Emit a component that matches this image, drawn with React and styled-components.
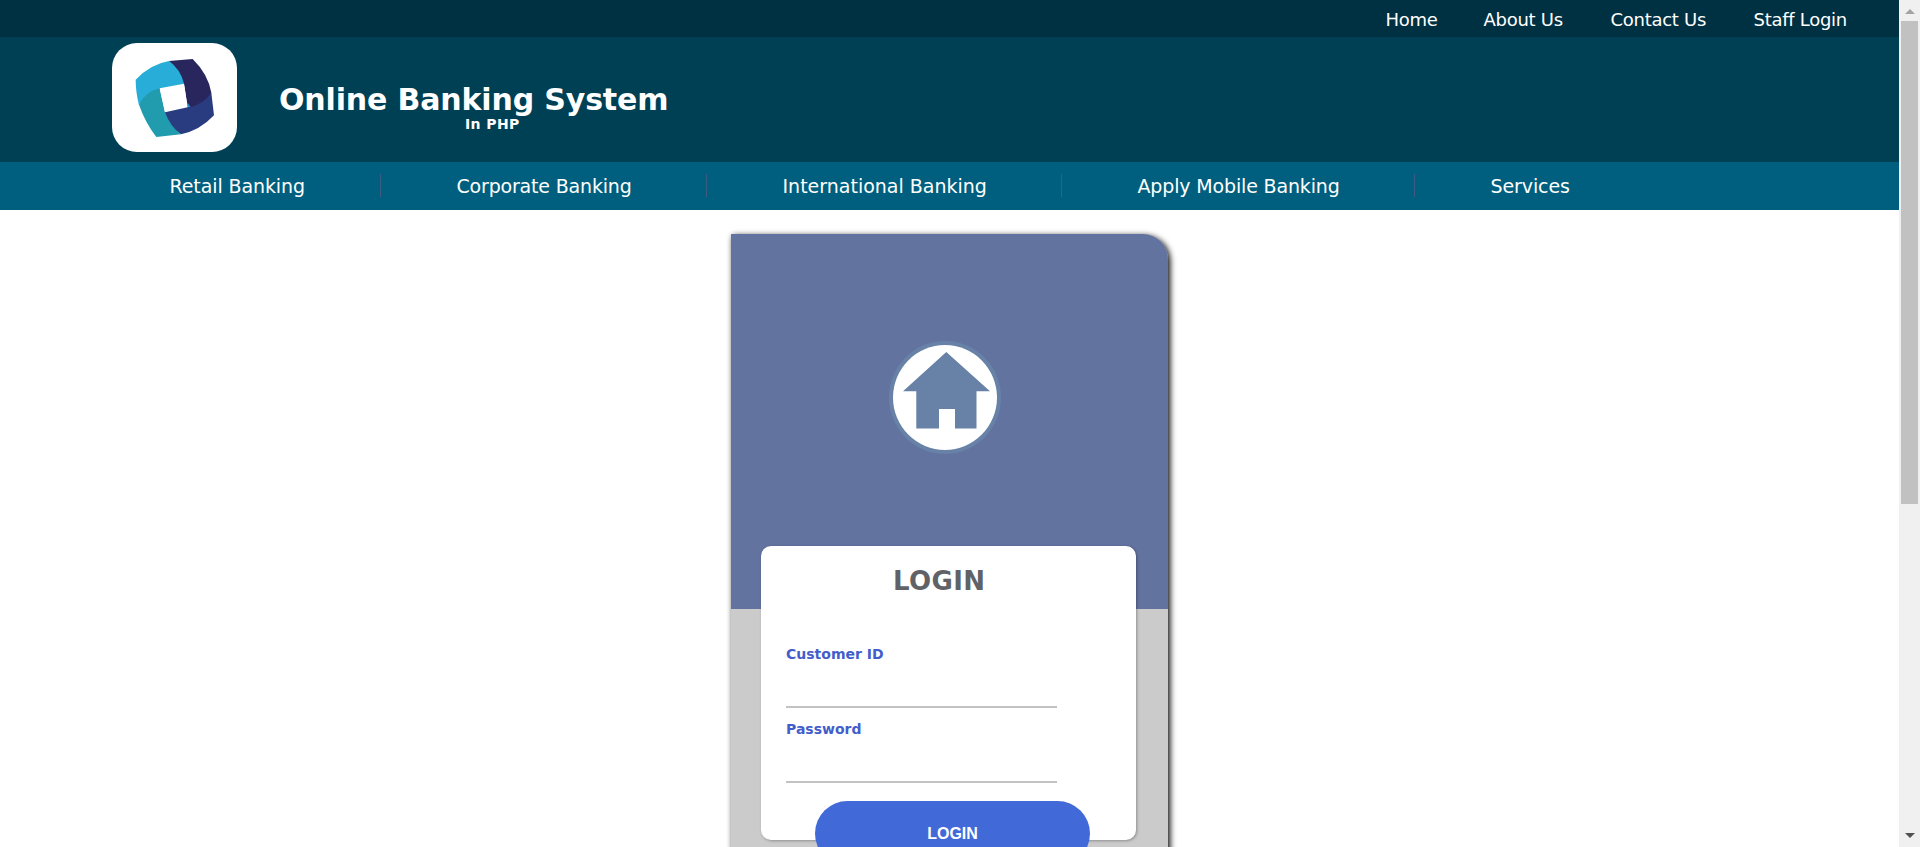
import React from "react";
import styled, { createGlobalStyle } from "styled-components";

const GlobalStyle = createGlobalStyle`
  * { box-sizing: border-box; }
  body {
    margin: 0;
    background: #fff;
    font-family: "DejaVu Sans", Verdana, sans-serif;
    overflow: hidden;
  }
`;

const Screen = styled.div`
  display: flex;
  width: 100%;
  height: 847px;
  overflow: hidden;
`;

const Page = styled.div`
  flex: 1;
  height: 100%;
  overflow: hidden;
`;

const TopBar = styled.nav`
  display: flex;
  justify-content: flex-end;
  align-items: center;
  gap: 47px;
  height: 37px;
  padding: 2px 50.5px 0 0;
  background: #003142;
`;

const TopLink = styled.a`
  width: ${(p) => p.$width}px;
  color: #fff;
  font-size: 18px;
  line-height: 22px;
  letter-spacing: -0.28px;
  white-space: nowrap;
`;

const Header = styled.header`
  display: flex;
  align-items: flex-start;
  height: 125px;
  padding: 6px 0 0 112px;
  background: #004054;
`;

const LogoTile = styled.div`
  width: 125px;
  height: 109px;
  border-radius: 25px;
  background: #fff;
  overflow: hidden;
`;

const Brand = styled.div`
  width: 390px;
  margin: 39px 0 0 42px;
  color: #fff;
  font-weight: bold;
`;

const BrandName = styled.h1`
  margin: 0;
  font-size: 30px;
  line-height: 36px;
  letter-spacing: -0.15px;
  white-space: nowrap;
`;

const BrandNote = styled.div`
  padding-left: 186px;
  margin-top: -2px;
  font-size: 14px;
  line-height: 16px;
  letter-spacing: 0.4px;
`;

const MainNav = styled.nav`
  display: flex;
  align-items: center;
  height: 48px;
  padding: 0 0 1px 94px;
  background: #005f7e;
`;

const NavItem = styled.a`
  width: ${(p) => p.$width}px;
  padding-left: 75.5px;
  border-right: ${(p) => (p.$last ? "0" : "1px")} solid #3d5c84;
  height: 23px;
  color: #fff;
  font-size: 19px;
  line-height: 24px;
  letter-spacing: ${(p) => p.$spacing || 0}px;
  white-space: nowrap;
`;

const Card = styled.main`
  width: 437px;
  height: 760px;
  margin: 24px 0 0 731px;
  border-radius: 0 25px 0 0;
  background: #cbcbcb;
  box-shadow: 2px 2px 6px #000;
`;

const Banner = styled.div`
  display: flex;
  justify-content: center;
  height: 375px;
  padding: 107px 9px 0 0;
  border-radius: 0 25px 0 0;
  background: #6373a0;
`;

const LoginBox = styled.form`
  position: relative;
  width: 375px;
  height: 294px;
  margin: -63px 0 0 30px;
  padding: 11px 25px 0;
  border-radius: 10px;
  background: #fff;
  box-shadow: 1px 1px 3px rgba(0, 0, 0, 0.3);
`;

const LoginTitle = styled.h2`
  margin: 0 0 40px 107px;
  color: #606267;
  font-size: 26px;
  line-height: 48px;
  letter-spacing: 0.4px;
`;

const Field = styled.label`
  display: block;
  height: 75px;
  color: #435dcb;
  font-size: 14px;
  font-weight: bold;
  line-height: 18px;
`;

const FieldInput = styled.input`
  display: block;
  width: 271px;
  height: 45px;
  margin-top: 0;
  padding: 0;
  border: 0;
  border-bottom: 2px solid #c2c2c2;
  background: transparent;
  outline: none;
`;

const LoginButton = styled.button`
  display: block;
  width: 275px;
  height: 65px;
  margin: 6px 0 0 29px;
  border: 0;
  border-radius: 33px;
  background: #416ad8;
  color: #fff;
  font: bold 16px "Liberation Sans", Arial, sans-serif;
`;

const ScrollTrack = styled.div`
  display: flex;
  flex-direction: column;
  align-items: center;
  width: 21px;
  height: 100%;
  padding: 9px 0;
  background: #f0f0f0;
`;

const ScrollThumb = styled.div`
  width: 17px;
  height: 483px;
  margin: 7px 0 auto;
  background: #c1c1c1;
`;

const ScrollArrow = styled.svg`
  display: block;
  width: 10px;
  height: 5px;
`;

const BankLogo = () => (
  <svg width="125" height="109" viewBox="-54 -27 375 327">
    <path d="M17 83Q62 36 117 27Q158 50 168 100L92 114L27 160Q17 120 17 83Z" fill="#27add8" />
    <path d="M244 122L252 190Q210 235 153 247Q115 226 100 181L173 160Z" fill="#293c80" />
    <path d="M117 27L188 21Q234 66 244 122Q222 157 173 167L162 95Q151 51 117 27Z" fill="#29265e" />
    <path d="M89 109L105 181Q122 226 153 247L79 255Q46 212 27 158Q47 119 89 109Z" fill="#219bae" />
    <path d="M170 150L174 166L182 164Z" fill="#278fc8" />
    <path d="M89 109L162 95L173 166L105 181Z" fill="#fff" />
  </svg>
);

const HouseBadge = () => (
  <svg width="112" height="113" viewBox="0 0 112 113">
    <ellipse cx="56" cy="56.5" rx="56" ry="56.5" fill="#6782a6" />
    <ellipse cx="56" cy="56.5" rx="52" ry="52.5" fill="#fff" />
    <path d="M57.3 11L101 50.3H87.5V87.5H66V68H50V87.5H27.3V50.3H14Z" fill="#6782a6" />
  </svg>
);

export default function App() {
  return (
    <>
      <GlobalStyle />
      <Screen>
        <Page>
          <TopBar>
            <TopLink $width={51}>Home</TopLink>
            <TopLink $width={80}>About Us</TopLink>
            <TopLink $width={96}>Contact Us</TopLink>
            <TopLink $width={95}>Staff Login</TopLink>
          </TopBar>
          <Header>
            <LogoTile>
              <BankLogo />
            </LogoTile>
            <Brand>
              <BrandName>Online Banking System</BrandName>
              <BrandNote>In PHP</BrandNote>
            </Brand>
          </Header>
          <MainNav>
            <NavItem $width={287} $spacing={-0.1}>Retail Banking</NavItem>
            <NavItem $width={326} $spacing={-0.18}>Corporate Banking</NavItem>
            <NavItem $width={355}>International Banking</NavItem>
            <NavItem $width={353} $spacing={-0.15}>Apply Mobile Banking</NavItem>
            <NavItem $width={230} $spacing={-0.1} $last>Services</NavItem>
          </MainNav>
          <Card>
            <Banner>
              <HouseBadge />
            </Banner>
            <LoginBox>
              <LoginTitle>LOGIN</LoginTitle>
              <Field>
                Customer ID
                <FieldInput type="text" />
              </Field>
              <Field>
                Password
                <FieldInput type="password" />
              </Field>
              <LoginButton type="button">LOGIN</LoginButton>
            </LoginBox>
          </Card>
        </Page>
        <ScrollTrack>
          <ScrollArrow viewBox="0 0 10 5">
            <path d="M5 0L10 5H0Z" fill="#a3a3a3" />
          </ScrollArrow>
          <ScrollThumb />
          <ScrollArrow viewBox="0 0 10 5">
            <path d="M0 0H10L5 5Z" fill="#505050" />
          </ScrollArrow>
        </ScrollTrack>
      </Screen>
    </>
  );
}
